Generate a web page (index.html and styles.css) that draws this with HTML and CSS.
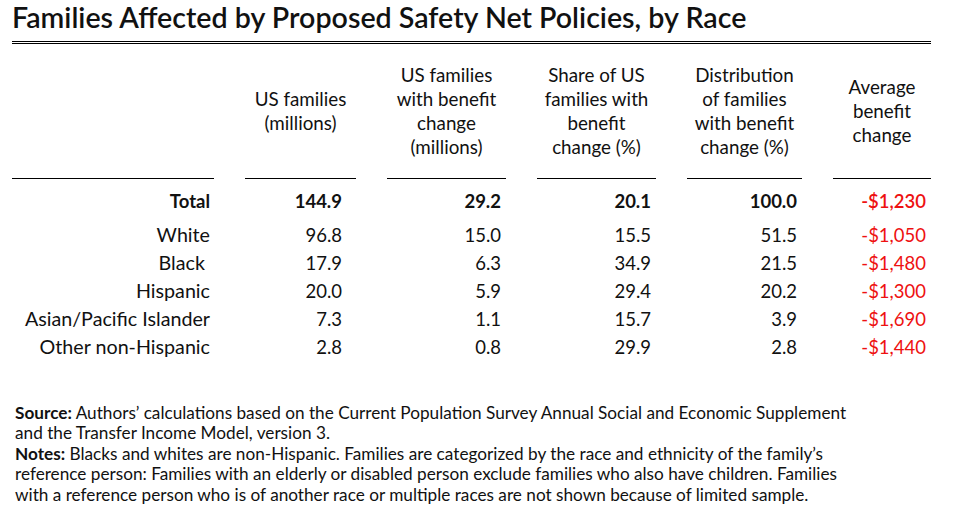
FILE: index.html
```html
<!DOCTYPE html>
<html lang="en">
<head>
<meta charset="utf-8">
<title>Families Affected by Proposed Safety Net Policies, by Race</title>
<link rel="stylesheet" href="styles.css">
</head>
<body>
<div class="page">
  <h1 class="title">Families Affected by Proposed Safety Net Policies, by Race</h1>
  <div class="title-rule"></div>
  <div class="table">
    <div class="head label-col"></div>
    <div class="head">US families<br>(millions)</div>
    <div class="head">US families<br>with benefit<br>change<br>(millions)</div>
    <div class="head">Share of US<br>families with<br>benefit<br>change (%)</div>
    <div class="head">Distribution<br>of families<br>with benefit<br>change (%)</div>
    <div class="head">Average<br>benefit<br>change</div>

    <div class="cell label total">Total</div>
    <div class="cell num total pad-wide">144.9</div>
    <div class="cell num total">29.2</div>
    <div class="cell num total">20.1</div>
    <div class="cell num total">100.0</div>
    <div class="cell num total neg">-$1,230</div>

    <div class="cell label">White</div>
    <div class="cell num pad-wide">96.8</div>
    <div class="cell num">15.0</div>
    <div class="cell num">15.5</div>
    <div class="cell num">51.5</div>
    <div class="cell num neg">-$1,050</div>

    <div class="cell label">Black&nbsp;</div>
    <div class="cell num pad-wide">17.9</div>
    <div class="cell num">6.3</div>
    <div class="cell num">34.9</div>
    <div class="cell num">21.5</div>
    <div class="cell num neg">-$1,480</div>

    <div class="cell label">Hispanic</div>
    <div class="cell num pad-wide">20.0</div>
    <div class="cell num">5.9</div>
    <div class="cell num">29.4</div>
    <div class="cell num">20.2</div>
    <div class="cell num neg">-$1,300</div>

    <div class="cell label">Asian/Pacific Islander</div>
    <div class="cell num pad-wide">7.3</div>
    <div class="cell num">1.1</div>
    <div class="cell num">15.7</div>
    <div class="cell num">3.9</div>
    <div class="cell num neg">-$1,690</div>

    <div class="cell label">Other non-Hispanic</div>
    <div class="cell num pad-wide">2.8</div>
    <div class="cell num">0.8</div>
    <div class="cell num">29.9</div>
    <div class="cell num">2.8</div>
    <div class="cell num neg">-$1,440</div>
  </div>
  <p class="notes"><b>Source:</b> Authors’ calculations based on the Current Population Survey Annual Social and Economic Supplement<br>and the Transfer Income Model, version 3.<br><b>Notes:</b> Blacks and whites are non-Hispanic. Families are categorized by the race and ethnicity of the family’s<br>reference person: Families with an elderly or disabled person exclude families who also have children. Families<br>with a reference person who is of another race or multiple races are not shown because of limited sample.</p>
</div>
</body>
</html>
```

FILE: styles.css
```css
* { box-sizing: border-box; }
html, body {
  margin: 0;
  padding: 0;
  background: #ffffff;
}
body {
  font-family: Lato, "Open Sans", "Liberation Sans", sans-serif;
  color: #111111;
}
.page {
  width: 958px;
  height: 517px;
  padding: 0 0 0 12px;
  overflow: hidden;
}
.title {
  margin: 0;
  font-size: 28.6px;
  line-height: 35px;
  font-weight: 600;
  color: #111111;
  white-space: nowrap;
}
.title-rule {
  width: 919px;
  margin-top: 6px;
  border-top: 3px double #000000;
}
.table {
  display: grid;
  grid-template-columns: 202px 111px 119px 119px 115px 98px;
  column-gap: 31px;
  padding-top: 19px;
  font-size: 18.5px;
}
.head {
  height: 116px;
  padding-bottom: 20px;
  border-bottom: 1px solid #000000;
  display: flex;
  align-items: center;
  justify-content: center;
  text-align: center;
  line-height: 24px;
  margin-bottom: 8px;
  font-size: 18.8px;
}
.cell {
  line-height: 28px;
  white-space: nowrap;
}
.label {
  text-align: right;
  padding-right: 4px;
  font-size: 19.7px;
}
.num {
  text-align: right;
  padding-right: 5px;
}
.num.pad-wide {
  padding-right: 14px;
}
.total {
  font-weight: 700;
  margin-bottom: 6px;
}
.label.total {
  font-size: 18.5px;
}
.neg {
  color: #ee1111;
}
.num.total.neg {
  font-weight: 600;
}
.notes {
  margin: 0;
  padding: 42px 0 0 3px;
  font-size: 17.2px;
  line-height: 20.4px;
  white-space: nowrap;
  color: #111111;
}
.notes b {
  font-weight: 700;
}
```
